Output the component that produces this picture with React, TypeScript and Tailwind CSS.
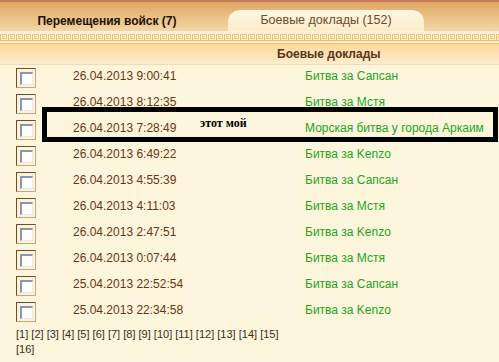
import React from 'react';

type Report = { date: string; title: string };

const reports: Report[] = [
  { date: '26.04.2013 9:00:41', title: 'Битва за Сапсан' },
  { date: '26.04.2013 8:12:35', title: 'Битва за Мстя' },
  { date: '26.04.2013 7:28:49', title: 'Морская битва у города Аркаим' },
  { date: '26.04.2013 6:49:22', title: 'Битва за Kenzo' },
  { date: '26.04.2013 4:55:39', title: 'Битва за Сапсан' },
  { date: '26.04.2013 4:11:03', title: 'Битва за Мстя' },
  { date: '26.04.2013 2:47:51', title: 'Битва за Kenzo' },
  { date: '26.04.2013 0:07:44', title: 'Битва за Мстя' },
  { date: '25.04.2013 22:52:54', title: 'Битва за Сапсан' },
  { date: '25.04.2013 22:34:58', title: 'Битва за Kenzo' },
];

const pages = Array.from({ length: 16 }, (_, i) => i + 1);

const Checkbox: React.FC = () => (
  <div className="w-[20px] h-[20px] border border-t-[#6e4e2c] border-l-[#6e4e2c] border-r-[#c9a57b] border-b-[#c9a57b] bg-[#fbf3dc] flex items-center justify-center">
    <div className="w-[13px] h-[13px] bg-white border-t-2 border-l-2 border-t-[#8a96b4] border-l-[#8a96b4] border-r border-b border-r-[#e8e8ee] border-b-[#e8e8ee]" />
  </div>
);

const Meander: React.FC = () => (
  <svg width="499" height="12" className="block">
    <defs>
      <pattern id="key" width="8" height="12" patternUnits="userSpaceOnUse">
        <path
          d="M0.5 9.5 V3.5 H6.5 V7.5 H2.5 V5.5 H4.5"
          fill="none"
          stroke="#efc165"
          strokeWidth="1"
        />
        <path d="M0 9.5 H8" stroke="#efc165" strokeWidth="1" />
      </pattern>
    </defs>
    <rect width="499" height="12" fill="#fdf1d9" />
    <rect y="0" width="499" height="12" fill="url(#key)" />
  </svg>
);

export default function App() {
  return (
    <div className="relative w-[499px] h-[362px] overflow-hidden bg-[#fdf6dc] font-['Liberation_Sans',Arial,sans-serif]">
      {/* Tabs */}
      <div className="h-[31px] border-t-2 border-[#c67a5c] bg-gradient-to-b from-[#e0a862] to-[#f2d6a6] flex items-end">
        <div className="w-[214px] h-[21px] flex items-center justify-center text-[12px] font-bold text-[#1c1208]">
          Перемещения войск (7)
        </div>
        <div className="ml-[14px] w-[196px] h-[21px] rounded-t-[12px] bg-gradient-to-b from-[#fff6e4] to-[#fdecc8] flex items-center justify-center text-[12.5px] text-[#6f4a2a]">
          Боевые доклады (152)
        </div>
      </div>

      <Meander />
      <div className="h-px bg-[#efc06a]" />

      {/* Column header */}
      <div className="h-[21px] bg-gradient-to-b from-[#fdd89a] to-[#fdedcd] border-b border-[#f3dcb2] flex items-center pl-[277px] text-[12px] font-bold text-[#5a3418]">
        Боевые доклады
      </div>

      {/* Rows */}
      <div>
        {reports.map((r, i) => (
          <div key={i} className="h-[26px] flex items-start">
            <div className="ml-[16px] mt-[3px]">
              <Checkbox />
            </div>
            <div className="ml-[37px] mt-[4px] w-[232px] text-[12px] leading-[14px] text-[#6c3512]">
              {r.date}
            </div>
            <a className="mt-[4px] text-[12px] leading-[14px] text-[#22a622]">{r.title}</a>
          </div>
        ))}
      </div>

      {/* Pagination */}
      <div className="w-[300px] px-[16px] pt-[2px] text-[11px] leading-[15px] text-[#3c2c1c]">
        {pages.map((p) => (
          <span key={p}>[{p}] </span>
        ))}
      </div>

      {/* Annotation */}
      <div className="absolute left-[42px] top-[107px] w-[456px] h-[35px] border-[5px] border-black" />
      <div className="absolute left-[200px] top-[116px] text-[12px] font-bold leading-[14px] text-black font-['Liberation_Serif',serif]">
        этот мой
      </div>
    </div>
  );
}
